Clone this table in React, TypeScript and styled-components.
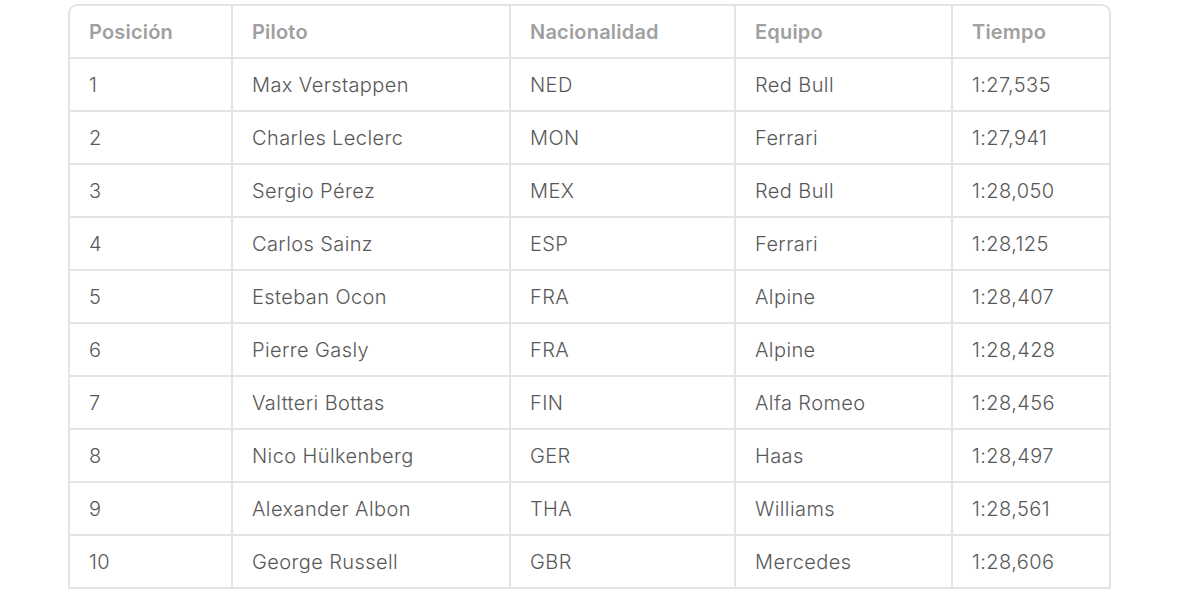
import React from "react";
import styled, { createGlobalStyle } from "styled-components";

const Global = createGlobalStyle`
  body {
    margin: 0;
    background: #fff;
    font-family: Inter, "Noto Sans", sans-serif;
  }
`;

const Page = styled.div`
  padding: 4px 0 0 68px;
`;

const Frame = styled.div`
  width: 1043px;
  border: 2px solid #e4e4e4;
  border-bottom: none;
  border-radius: 9px 9px 0 0;
  overflow: hidden;
  box-sizing: border-box;
`;

const Table = styled.table`
  width: 100%;
  border-collapse: collapse;
  table-layout: fixed;
`;

const Col = styled.col<{ $w: number }>`
  width: ${(p) => p.$w}px;
`;

const Head = styled.th`
  height: 51px;
  padding: 0 0 0 19px;
  text-align: left;
  font-size: 20px;
  font-weight: 600;
  letter-spacing: 0.2px;
  color: #a0a0a0;
  border-left: 2px solid #e4e4e4;
  border-bottom: 2px solid #e4e4e4;
  &:first-child {
    border-left: none;
  }
`;

const Cell = styled.td`
  height: 51px;
  padding: 0 0 0 19px;
  font-size: 20px;
  font-weight: 300;
  letter-spacing: 0.4px;
  color: #585858;
  border-left: 2px solid #e4e4e4;
  border-bottom: 2px solid #e4e4e4;
  white-space: nowrap;
  overflow: hidden;
  &:first-child {
    border-left: none;
  }
`;

const columns = [
  { label: "Posición", w: 162 },
  { label: "Piloto", w: 278 },
  { label: "Nacionalidad", w: 225 },
  { label: "Equipo", w: 217 },
  { label: "Tiempo", w: 157 },
];

const rows = [
  ["1", "Max Verstappen", "NED", "Red Bull", "1:27,535"],
  ["2", "Charles Leclerc", "MON", "Ferrari", "1:27,941"],
  ["3", "Sergio Pérez", "MEX", "Red Bull", "1:28,050"],
  ["4", "Carlos Sainz", "ESP", "Ferrari", "1:28,125"],
  ["5", "Esteban Ocon", "FRA", "Alpine", "1:28,407"],
  ["6", "Pierre Gasly", "FRA", "Alpine", "1:28,428"],
  ["7", "Valtteri Bottas", "FIN", "Alfa Romeo", "1:28,456"],
  ["8", "Nico Hülkenberg", "GER", "Haas", "1:28,497"],
  ["9", "Alexander Albon", "THA", "Williams", "1:28,561"],
  ["10", "George Russell", "GBR", "Mercedes", "1:28,606"],
];

export default function App() {
  return (
    <Page>
      <Global />
      <Frame>
        <Table>
          <colgroup>
            {columns.map((c) => (
              <Col key={c.label} $w={c.w} />
            ))}
          </colgroup>
          <thead>
            <tr>
              {columns.map((c) => (
                <Head key={c.label}>{c.label}</Head>
              ))}
            </tr>
          </thead>
          <tbody>
            {rows.map((r) => (
              <tr key={r[0]}>
                {r.map((v, i) => (
                  <Cell key={i}>{v}</Cell>
                ))}
              </tr>
            ))}
          </tbody>
        </Table>
      </Frame>
    </Page>
  );
}
